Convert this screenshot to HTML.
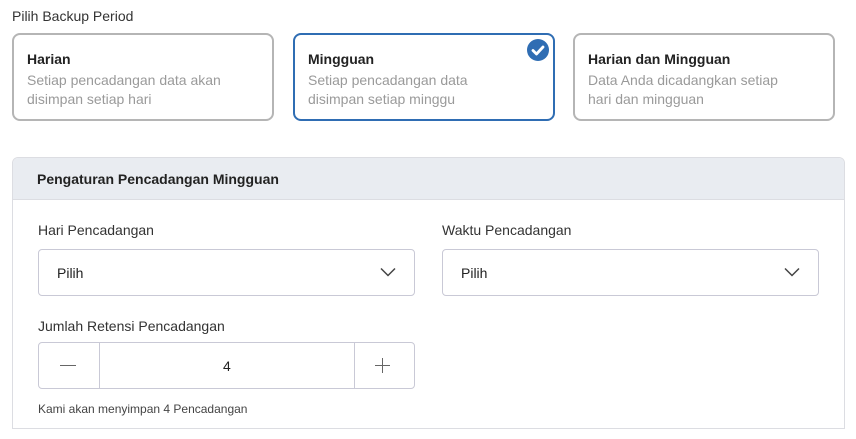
<!DOCTYPE html>
<html><head><style>
body{margin:0;width:856px;height:439px;background:#fff;font-family:"Liberation Sans",sans-serif;color:#222;position:relative;overflow:hidden}
.a{position:absolute}
.card{position:absolute;top:33px;border:2px solid #b5b5b5;border-radius:8px;box-sizing:border-box;width:262px;height:88px}
.card b{position:absolute;left:13px;top:16px;font-size:14px;color:#222}
.card span{position:absolute;left:13px;top:36px;font-size:14px;line-height:19px;color:#9a9a9a}
.sel{position:absolute;height:47px;border:1px solid #c9c9d6;border-radius:4px;box-sizing:border-box;width:377px}
.sel span{position:absolute;left:18px;top:15px;font-size:14px}
.lbl{position:absolute;font-size:14px;color:#333}
</style></head><body>
<div class="a" style="left:12px;top:8px;font-size:14px;color:#333">Pilih Backup Period</div>
<div class="card" style="left:12px"><b>Harian</b><span>Setiap pencadangan data akan<br>disimpan setiap hari</span></div>
<div class="card" style="left:293px;border-color:#2f6db3"><b>Mingguan</b><span>Setiap pencadangan data<br>disimpan setiap minggu</span>
<svg class="a" style="left:232px;top:4px" width="22" height="22" viewBox="0 0 22 22"><circle cx="11" cy="11" r="11" fill="#2f6db3"/><path d="M6 11.5l3.5 3.5 6.5-7" stroke="#fff" stroke-width="2.8" fill="none" stroke-linecap="round" stroke-linejoin="round"/></svg></div>
<div class="card" style="left:573px"><b>Harian dan Mingguan</b><span>Data Anda dicadangkan setiap<br>hari dan mingguan</span></div>
<div class="a" style="left:12px;top:157px;width:833px;height:272px;border:1px solid #dcdde2;border-radius:6px 6px 0 0;box-sizing:border-box"></div>
<div class="a" style="left:13px;top:158px;width:831px;height:41px;background:#e9ecf1;border-bottom:1px solid #dcdde2;border-radius:5px 5px 0 0"></div>
<div class="a" style="left:37px;top:171px;font-size:14px;font-weight:bold;color:#222">Pengaturan Pencadangan Mingguan</div>
<div class="lbl" style="left:38px;top:222px">Hari Pencadangan</div>
<div class="lbl" style="left:442px;top:222px">Waktu Pencadangan</div>
<div class="sel" style="left:38px;top:249px"><span>Pilih</span><svg class="a" style="right:18px;top:17px" width="16" height="10" viewBox="0 0 16 10"><path d="M1 1.5l7 7 7-7" stroke="#444" stroke-width="1.5" fill="none"/></svg></div>
<div class="sel" style="left:442px;top:249px"><span>Pilih</span><svg class="a" style="right:18px;top:17px" width="16" height="10" viewBox="0 0 16 10"><path d="M1 1.5l7 7 7-7" stroke="#444" stroke-width="1.5" fill="none"/></svg></div>
<div class="lbl" style="left:38px;top:318px">Jumlah Retensi Pencadangan</div>
<div class="sel" style="left:38px;top:342px;height:47px">
<div class="a" style="left:60px;top:0;width:1px;height:45px;background:#c9c9d6"></div>
<div class="a" style="left:315px;top:0;width:1px;height:45px;background:#c9c9d6"></div>
<div class="a" style="left:21px;top:22px;width:16px;height:1px;background:#666"></div>
<div class="a" style="left:336px;top:22px;width:15px;height:1px;background:#666"></div>
<div class="a" style="left:343px;top:15px;width:1px;height:15px;background:#666"></div>
<div class="a" style="left:184px;top:15px;font-size:14px">4</div>
</div>
<div class="a" style="left:38px;top:402px;font-size:12px;color:#444">Kami akan menyimpan 4 Pencadangan</div>
</body></html>
